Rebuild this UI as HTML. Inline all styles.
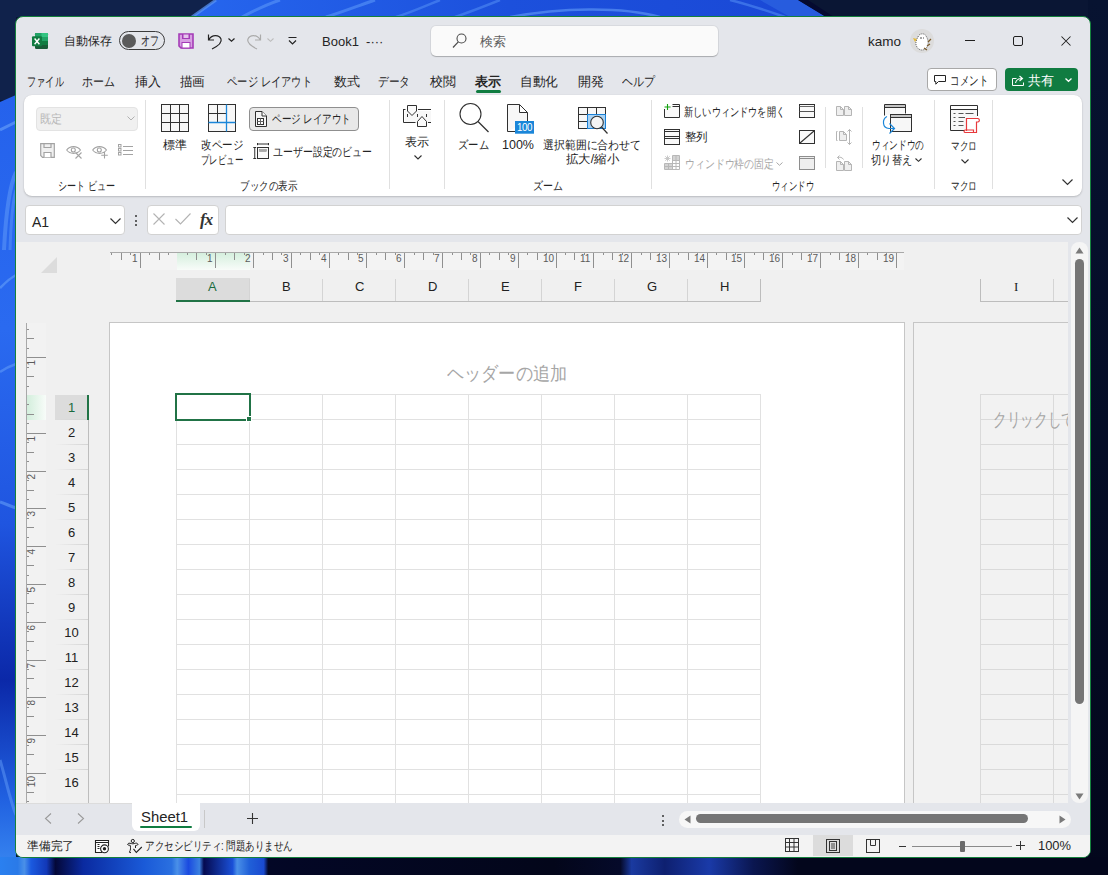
<!DOCTYPE html><html><head><meta charset="utf-8"><style>
*{box-sizing:border-box;margin:0;padding:0}
html,body{width:1108px;height:875px;overflow:hidden}
body{position:relative;font-family:"Liberation Sans",sans-serif;color:#242424;background:#0c1a3a}
.a{position:absolute}
.t{position:absolute;white-space:nowrap;font-size:13px;line-height:16px}
svg{position:absolute;overflow:visible}
#wp{position:absolute;left:0;top:0;width:1108px;height:875px;overflow:hidden;background:#0f2149}
#win{position:absolute;left:15px;top:16px;width:1076px;height:842px;border:1px solid #14803c;border-radius:8px;background:#e4e6eb;overflow:hidden}
</style></head><body><div id="wp">
<svg style="left:0px;top:0px" width="1108" height="875" viewBox="0 0 1108 875">
<defs>
<linearGradient id="gl" x1="0" y1="0" x2="0" y2="1">
<stop offset="0" stop-color="#2562ec"/><stop offset="0.3" stop-color="#2a6af0"/><stop offset="0.55" stop-color="#1f55e0"/>
<stop offset="0.75" stop-color="#0b28a8"/><stop offset="0.9" stop-color="#2060e0"/><stop offset="1" stop-color="#3a8af2"/></linearGradient>
<linearGradient id="gt" x1="0" y1="0" x2="1" y2="0">
<stop offset="0" stop-color="#2666ee"/><stop offset="0.5" stop-color="#1c50dc"/><stop offset="1" stop-color="#1a48d6"/></linearGradient>
<linearGradient id="gr" x1="0" y1="0" x2="0" y2="1">
<stop offset="0" stop-color="#071331"/><stop offset="1" stop-color="#03071c"/></linearGradient>
</defs>
<rect x="0" y="0" width="1108" height="875" fill="#0a1634"/>
<rect x="0" y="0" width="600" height="17" fill="#10224b"/>
<rect x="1088" y="0" width="20" height="875" fill="url(#gr)"/>
<path d="M216 0 L798 0 L826 17 L192 17 Z" fill="url(#gt)"/><path d="M760 0 L798 0 L826 17 L790 17 Z" fill="#2a62e0" opacity=".8"/><path d="M798 0 L826 17 L834 17 L808 0 Z" fill="#050a30"/>
<path d="M216 0 L192 17" stroke="#5a96f8" stroke-width="3" opacity=".7"/>
<path d="M280 0 C265 5 255 10 242 17" stroke="#5a96f8" stroke-width="3" opacity=".6" fill="none"/>
<path d="M375 0 C360 5 345 11 326 17" stroke="#5a96f8" stroke-width="3" opacity=".6" fill="none"/>
<path d="M440 0 C425 6 412 12 396 17" stroke="#5a96f8" stroke-width="2.5" opacity=".5" fill="none"/>
<path d="M500 0 C480 8 470 12 455 17" stroke="#5a96f8" stroke-width="2.5" opacity=".5" fill="none"/>
<path d="M510 17 C560 8 620 6 660 17" stroke="#6aa4fa" stroke-width="2.5" opacity=".55" fill="none"/>
<path d="M730 0 C750 5 765 10 785 17" stroke="#5a96f8" stroke-width="2.5" opacity=".5" fill="none"/>

<rect x="0" y="0" width="16" height="100" fill="#10224b"/>
<path d="M0 102 L16 95 L16 875 L0 875 Z" fill="url(#gl)"/>
<path d="M0 130 C6 127 12 124 16 122" stroke="#6aa4fa" stroke-width="3" opacity=".6" fill="none"/>
<path d="M4 250 C6 210 10 185 16 172" stroke="#6aa4fa" stroke-width="4" opacity=".45" fill="none"/>
<path d="M10 250 C11 220 13 200 16 190" stroke="#6aa4fa" stroke-width="3" opacity=".4" fill="none"/>
<path d="M0 288 C6 282 10 278 16 275" stroke="#6aa4fa" stroke-width="2.5" opacity=".55" fill="none"/>
<path d="M0 372 C6 368 10 366 16 364" stroke="#6aa4fa" stroke-width="2.5" opacity=".5" fill="none"/>
<path d="M0 502 C6 504 10 506 16 508" stroke="#6aa4fa" stroke-width="3" opacity=".55" fill="none"/>
<path d="M0 760 C6 780 10 800 16 815" stroke="#6aa4fa" stroke-width="3" opacity=".45" fill="none"/>
<linearGradient id="gb" x1="0" y1="0" x2="1108" y2="0" gradientUnits="userSpaceOnUse">
<stop offset="0" stop-color="#2a80f0"/><stop offset="0.016" stop-color="#2a7ae8"/><stop offset="0.022" stop-color="#4a90e8"/><stop offset="0.028" stop-color="#1a5ae0"/>
<stop offset="0.042" stop-color="#1238b8"/><stop offset="0.05" stop-color="#040838"/><stop offset="0.075" stop-color="#0a2aa0"/><stop offset="0.13" stop-color="#1a5ad8"/>
<stop offset="0.155" stop-color="#2a70e0"/><stop offset="0.16" stop-color="#4a90e8"/><stop offset="0.17" stop-color="#1a4ae0"/><stop offset="0.18" stop-color="#3a80e0"/>
<stop offset="0.184" stop-color="#050a50"/><stop offset="0.21" stop-color="#1a50d8"/><stop offset="0.214" stop-color="#4a90e8"/><stop offset="0.225" stop-color="#2060d8"/>
<stop offset="0.238" stop-color="#1a4ad0"/><stop offset="0.242" stop-color="#030726"/><stop offset="0.5" stop-color="#03061a"/><stop offset="0.56" stop-color="#050a2a"/>
<stop offset="0.57" stop-color="#1a3aa0"/><stop offset="0.6" stop-color="#0e2070"/><stop offset="0.64" stop-color="#1a3aa8"/><stop offset="0.68" stop-color="#0a1650"/>
<stop offset="0.72" stop-color="#03061c"/><stop offset="1" stop-color="#03061c"/></linearGradient>
<rect x="0" y="857" width="1108" height="18" fill="url(#gb)"/>
</svg>
</div>
<div id="win"><div class="a" style="left:-16px;top:-17px;width:1108px;height:875px">
<svg style="left:32px;top:33px" width="16" height="16" viewBox="0 0 16 16">
<rect x="3" y="0" width="13" height="16" rx="1.2" fill="#185c37"/>
<rect x="3" y="0" width="13" height="4" rx="1" fill="#21a366"/>
<rect x="9.5" y="0" width="6.5" height="4" fill="#33c481"/>
<rect x="3" y="4" width="13" height="4" fill="#107c41"/>
<rect x="9.5" y="4" width="6.5" height="4" fill="#21a366"/>
<rect x="3" y="8" width="13" height="4" fill="#185c37"/>
<rect x="9.5" y="8" width="6.5" height="4" fill="#107c41"/>
<rect x="0" y="3.3" width="10" height="10" rx="1" fill="#107c41"/>
<path d="M2.6 5.5 L7.4 11.2 M7.4 5.5 L2.6 11.2" stroke="#fff" stroke-width="1.4"/>
</svg>
<div class="t f" style="left:64px;top:33.0px;font-size:12px;line-height:16px;color:#242424;width:48px;">自動保存</div>
<div class="a" style="left:119px;top:31px;width:46px;height:19px;border:1.3px solid #3b3b3b;border-radius:10px;"></div>
<div class="a" style="left:122px;top:33.5px;width:14px;height:14px;background:#5b5b5b;border-radius:50%;"></div>
<div class="t f" style="left:141px;top:32.0px;font-size:13px;line-height:17px;color:#242424;width:18px;">オフ</div>
<svg style="left:178px;top:33px" width="16" height="16" viewBox="0 0 16 16">
<path d="M1 1 H15 V15 H3 L1 13 Z" fill="#d79fe2" stroke="#a43bb7" stroke-width="1.6"/>
<rect x="4" y="1" width="8" height="5" fill="#a43bb7"/>
<rect x="5.5" y="1.5" width="5" height="3.5" fill="#e5c4ec"/>
<rect x="4" y="9.5" width="8" height="5.5" fill="#fff" stroke="#a43bb7" stroke-width="1"/>
</svg>
<svg style="left:207px;top:33px" width="16" height="16" viewBox="0 0 16 16"><path d="M1.5 1.5 V7 H7 M2 6.5 C5 1.5 12 1.5 14 6 C15.5 10 11 13 5 16" fill="none" stroke="#242424" stroke-width="1.2"/></svg>
<svg style="left:228px;top:38px" width="7" height="4" viewBox="0 0 7 4"><path d="M0.5 0.5 L3.5 3.3 L6.5 0.5" fill="none" stroke="#242424" stroke-width="1.2"/></svg>
<svg style="left:246px;top:33px" width="16" height="16" viewBox="0 0 16 16"><path d="M14.5 1.5 V7 H9 M14 6.5 C11 1.5 4 1.5 2 6 C0.5 10 5 13 11 16" fill="none" stroke="#ababab" stroke-width="1.2"/></svg>
<svg style="left:267px;top:38px" width="7" height="4" viewBox="0 0 7 4"><path d="M0.5 0.5 L3.5 3.3 L6.5 0.5" fill="none" stroke="#bdbdbd" stroke-width="1.1"/></svg>
<svg style="left:288px;top:36px" width="9" height="9" viewBox="0 0 9 9"><path d="M0.5 1.5 H8.5 M1 4.5 L4.5 8 L8 4.5" fill="none" stroke="#242424" stroke-width="1.2"/></svg>
<div class="t" style="left:322px;top:32.5px;font-size:13px;line-height:17px;color:#242424;">Book1 &nbsp;-···</div>
<div class="a" style="left:431px;top:26px;width:287px;height:30px;background:#fafafa;border-radius:5px;box-shadow:0 1px 1px rgba(0,0,0,.22),0 0 0 1px rgba(0,0,0,.05);"></div>
<svg style="left:452px;top:33px" width="15" height="16" viewBox="0 0 15 16"><circle cx="9.5" cy="5.5" r="4.5" fill="none" stroke="#4a4a4a" stroke-width="1.1"/><path d="M6.3 8.8 L1 14.5" stroke="#4a4a4a" stroke-width="1.2"/></svg>
<div class="t f" style="left:480px;top:32.5px;font-size:13px;line-height:17px;color:#5d5d5d;width:26px;">検索</div>
<div class="t f" style="left:868px;top:32.5px;font-size:13px;line-height:17px;color:#242424;width:33px;">kamo</div>
<div class="a" style="left:910px;top:29px;width:24px;height:24px;background:#dcdcdc;border-radius:50%;"></div>
<svg style="left:910px;top:29px" width="24" height="24" viewBox="0 0 24 24"><path d="M8 8 C9 4 15 4 16 7 C18 10 19 14 17 18 C15 22 9 22 7 18 C5 15 6 11 8 8Z" fill="#fff" stroke="#222" stroke-width="0.7" stroke-dasharray="1 1"/><path d="M3 9 L7 10 L5 13Z" fill="#e3b93b"/><path d="M18 13 L21 10 M17 17 L20 15 M14 19 L17 21" stroke="#7a5a2a" stroke-width="1.2"/><path d="M10 9 H12 M13 9 H14" stroke="#222" stroke-width="0.8"/></svg>
<div class="a" style="left:965px;top:40px;width:10px;height:1px;background:#1f1f1f;"></div>
<div class="a" style="left:1013px;top:36px;width:10px;height:10px;border:1px solid #1f1f1f;border-radius:2px;"></div>
<svg style="left:1061px;top:36px" width="10" height="10" viewBox="0 0 10 10"><path d="M0.5 0.5 L9.5 9.5 M9.5 0.5 L0.5 9.5" stroke="#1f1f1f" stroke-width="1.05"/></svg>
<div class="t f" style="left:27px;top:72.5px;font-size:13px;line-height:17px;color:#242424;width:37px;">ファイル</div>
<div class="t f" style="left:82px;top:72.5px;font-size:13px;line-height:17px;color:#242424;width:33px;">ホーム</div>
<div class="t f" style="left:135px;top:72.5px;font-size:13px;line-height:17px;color:#242424;width:26px;">挿入</div>
<div class="t f" style="left:180px;top:72.5px;font-size:13px;line-height:17px;color:#242424;width:25px;">描画</div>
<div class="t f" style="left:227px;top:72.5px;font-size:13px;line-height:17px;color:#242424;width:85px;">ページ レイアウト</div>
<div class="t f" style="left:334px;top:72.5px;font-size:13px;line-height:17px;color:#242424;width:26px;">数式</div>
<div class="t f" style="left:378px;top:72.5px;font-size:13px;line-height:17px;color:#242424;width:32px;">データ</div>
<div class="t f" style="left:430px;top:72.5px;font-size:13px;line-height:17px;color:#242424;width:26px;">校閲</div>
<div class="t f" style="left:475px;top:72.5px;font-size:13px;line-height:17px;color:#242424;width:26px;font-weight:bold;">表示</div>
<div class="t f" style="left:520px;top:72.5px;font-size:13px;line-height:17px;color:#242424;width:38px;">自動化</div>
<div class="t f" style="left:578px;top:72.5px;font-size:13px;line-height:17px;color:#242424;width:26px;">開発</div>
<div class="t f" style="left:622px;top:72.5px;font-size:13px;line-height:17px;color:#242424;width:33px;">ヘルプ</div>
<div class="a" style="left:476px;top:90px;width:25px;height:2.5px;background:#107c41;border-radius:2px;"></div>
<div class="a" style="left:927px;top:68px;width:70px;height:23px;background:#fff;border:1px solid #a8a8a8;border-radius:4px;"></div>
<svg style="left:934px;top:75px" width="13" height="11" viewBox="0 0 13 11"><path d="M0.5 0.5 H11.5 V6.5 H4.5 L1.8 9.2 V6.5 H0.5 Z" fill="none" stroke="#242424" stroke-width="1"/></svg>
<div class="t f" style="left:950px;top:71.5px;font-size:13px;line-height:17px;color:#242424;width:38px;">コメント</div>
<div class="a" style="left:1005px;top:68px;width:73px;height:23px;background:#107c41;border-radius:4px;"></div>
<svg style="left:1012px;top:75px" width="14" height="12" viewBox="0 0 14 12"><path d="M4.5 3.5 H0.5 V10.5 H11.5 V7.5" fill="none" stroke="#fff" stroke-width="1"/><path d="M3.5 8 C4 5 6 3.5 10 3.5 M7.5 1 L10.5 3.5 L7.5 6" fill="none" stroke="#fff" stroke-width="1.1"/></svg>
<div class="t f" style="left:1028px;top:71.5px;font-size:13px;line-height:17px;color:#ffffff;width:26px;">共有</div>
<svg style="left:1065px;top:78px" width="7" height="4" viewBox="0 0 7 4"><path d="M0.5 0.5 L3.5 3.3 L6.5 0.5" fill="none" stroke="#fff" stroke-width="1.3"/></svg>
<div class="a" style="left:24px;top:95px;width:1058px;height:101px;background:#fff;border-radius:8px;box-shadow:0 1px 2px rgba(0,0,0,.18),0 0 1px rgba(0,0,0,.12);"></div>
<div class="a" style="left:145px;top:100px;width:1px;height:89px;background:#e0e0e0;"></div>
<div class="a" style="left:389px;top:100px;width:1px;height:89px;background:#e0e0e0;"></div>
<div class="a" style="left:444px;top:100px;width:1px;height:89px;background:#e0e0e0;"></div>
<div class="a" style="left:651px;top:100px;width:1px;height:89px;background:#e0e0e0;"></div>
<div class="a" style="left:934px;top:100px;width:1px;height:89px;background:#e0e0e0;"></div>
<div class="a" style="left:992px;top:100px;width:1px;height:89px;background:#e0e0e0;"></div>
<div class="a" style="left:825px;top:107px;width:1px;height:61px;background:#e0e0e0;"></div>
<div class="a" style="left:862px;top:107px;width:1px;height:61px;background:#e0e0e0;"></div>
<div class="t f" style="left:58px;top:177.5px;font-size:12px;line-height:16px;color:#242424;width:57px;">シート ビュー</div>
<div class="t f" style="left:240px;top:177.5px;font-size:12px;line-height:16px;color:#242424;width:57px;">ブックの表示</div>
<div class="t f" style="left:533px;top:177.5px;font-size:12px;line-height:16px;color:#242424;width:30px;">ズーム</div>
<div class="t f" style="left:772px;top:177.5px;font-size:12px;line-height:16px;color:#242424;width:42px;">ウィンドウ</div>
<div class="t f" style="left:951px;top:177.5px;font-size:12px;line-height:16px;color:#242424;width:26px;">マクロ</div>
<div class="a" style="left:36px;top:107px;width:102px;height:24px;background:#f0f0f0;border:1px solid #e3e3e3;border-radius:4px;"></div>
<div class="t f" style="left:40px;top:110.5px;font-size:12px;line-height:16px;color:#b8b8b8;width:22px;">既定</div>
<svg style="left:127px;top:116px" width="8" height="5" viewBox="0 0 8 5"><path d="M0.5 0.5 L4 4 L7.5 0.5" fill="none" stroke="#b0b0b0" stroke-width="1"/></svg>
<svg style="left:40px;top:143px" width="16" height="16" viewBox="0 0 16 16"><path d="M0.7 0.7 H14.3 V14.3 H2.5 L0.7 12.5 Z" fill="#f0f0f0" stroke="#a3a3a3" stroke-width="1.2"/><path d="M4 0.7 V4.5 H11 V0.7" fill="none" stroke="#a3a3a3" stroke-width="1.2"/><path d="M4 14.3 V9.5 H11 V14.3" fill="#fff" stroke="#a3a3a3" stroke-width="1.2"/></svg>
<svg style="left:66px;top:146px" width="17" height="14" viewBox="0 0 17 14"><path d="M0.7 4 C4 -0.5 11 -0.5 14.5 4 C11 8.5 4 8.5 0.7 4Z" fill="none" stroke="#a3a3a3" stroke-width="1.1"/><circle cx="7.3" cy="4" r="2" fill="none" stroke="#a3a3a3" stroke-width="1.1"/><path d="M9.5 6.5 L15.5 12.5 M15.5 6.5 L9.5 12.5" stroke="#a3a3a3" stroke-width="1.1"/></svg>
<svg style="left:92px;top:146px" width="17" height="14" viewBox="0 0 17 14"><path d="M0.7 4 C4 -0.5 11 -0.5 14.5 4 C11 8.5 4 8.5 0.7 4Z" fill="none" stroke="#a3a3a3" stroke-width="1.1"/><circle cx="7.3" cy="4" r="2" fill="none" stroke="#a3a3a3" stroke-width="1.1"/><path d="M12.5 6 V12.5 M9.2 9.2 H15.8" stroke="#a3a3a3" stroke-width="1.1"/></svg>
<svg style="left:118px;top:144px" width="16" height="14" viewBox="0 0 16 14"><rect x="0.5" y="0.5" width="2.5" height="2.5" fill="none" stroke="#a3a3a3"/><rect x="0.5" y="4.5" width="2.5" height="2.5" fill="none" stroke="#a3a3a3"/><rect x="0.5" y="8.5" width="2.5" height="2.5" fill="none" stroke="#a3a3a3"/><path d="M5 2.5 H15 M5 6.5 H15 M5 10.5 H15" stroke="#a3a3a3" stroke-width="1"/></svg>
<svg style="left:161px;top:104px" width="28" height="28" viewBox="0 0 28 28"><rect x="0.5" y="0.5" width="27" height="27" fill="#f7f7f7" stroke="#303030" stroke-width="1"/><path d="M9.5 0.5 V27.5 M18.5 0.5 V27.5 M0.5 9.5 H27.5 M0.5 18.5 H27.5" stroke="#303030" stroke-width="1"/></svg>
<div class="t f" style="left:163px;top:136.5px;font-size:12px;line-height:16px;color:#242424;width:24px;">標準</div>
<svg style="left:208px;top:104px" width="28" height="28" viewBox="0 0 28 28"><rect x="0.5" y="0.5" width="27" height="27" fill="#f7f7f7" stroke="#303030" stroke-width="1"/><path d="M9.5 0.5 V18.5 M0.5 9.5 H18.5" stroke="#303030" stroke-width="1"/><path d="M18.5 0.5 V27.5 M0.5 18.5 H27.5" stroke="#1a86d9" stroke-width="1.3"/></svg>
<div class="t f" style="left:201px;top:137.0px;font-size:12px;line-height:16px;color:#242424;width:42px;">改ページ</div>
<div class="t f" style="left:201px;top:151.5px;font-size:12px;line-height:16px;color:#242424;width:42px;">プレビュー</div>
<div class="a" style="left:249px;top:107px;width:110px;height:24px;background:#e8e8e8;border:1px solid #8f8f8f;border-radius:4px;"></div>
<svg style="left:255px;top:111px" width="12" height="16" viewBox="0 0 12 16"><path d="M0.5 15.5 V0.5 H7 L11.5 5 V15.5 Z" fill="#f4f4f4" stroke="#303030" stroke-width="1"/><path d="M7 0.5 V5 H11.5" fill="#fff" stroke="#303030" stroke-width="1"/><rect x="2.5" y="7.5" width="6" height="6" fill="#fff" stroke="#303030" stroke-width="1"/><path d="M5.5 7.5 V13.5 M2.5 10.5 H8.5" stroke="#666" stroke-width="1"/></svg>
<div class="t f" style="left:272px;top:111.0px;font-size:12px;line-height:16px;color:#242424;width:79px;">ページ レイアウト</div>
<svg style="left:253px;top:143px" width="17" height="17" viewBox="0 0 17 17"><path d="M0.3 4.5 H3.2 M1.75 4.5 V15.5 M0.3 15.5 H3.2 M4.5 1 H15.5 M4.5 0 V2.2 M15.5 0 V2.2" fill="none" stroke="#303030" stroke-width="1"/><rect x="4.5" y="4.5" width="11" height="11" fill="#f9f9f9" stroke="#303030"/><rect x="6.5" y="6.5" width="7" height="2" fill="#a8a8a8" stroke="#888" stroke-width="0.5"/></svg>
<div class="t f" style="left:273px;top:143.5px;font-size:12px;line-height:16px;color:#242424;width:99px;">ユーザー設定のビュー</div>
<svg style="left:403px;top:104px" width="29" height="24" viewBox="0 0 29 24"><rect x="2" y="7" width="26" height="12" fill="#f7f7f7"/><path d="M0.5 5.5 H2.5 M0.5 5 V18.5 H12.5 M15 5.5 H28 M4.5 10 V13 M14.5 10 V13 M23.5 10 V13 M25 18.5 H28" fill="none" stroke="#303030" stroke-width="1"/><path d="M4.5 1.5 H13.5 V7 L9 11.5 L4.5 7 Z M14.5 22.5 V17.5 L19 12.5 L23.5 17.5 V22.5 Z" fill="#fafafa" stroke="#303030" stroke-width="1"/></svg>
<div class="t f" style="left:405px;top:134.0px;font-size:12px;line-height:16px;color:#242424;width:24px;">表示</div>
<svg style="left:414px;top:155px" width="8" height="5" viewBox="0 0 8 5"><path d="M0.5 0.5 L4 4 L7.5 0.5" fill="none" stroke="#303030" stroke-width="1.1"/></svg>
<svg style="left:459px;top:103px" width="31" height="30" viewBox="0 0 31 30"><circle cx="11.5" cy="11" r="10.5" fill="none" stroke="#303030" stroke-width="1.1"/><path d="M19 18.5 L29.5 29" stroke="#303030" stroke-width="1.2"/></svg>
<div class="t f" style="left:458px;top:136.5px;font-size:12px;line-height:16px;color:#242424;width:31px;">ズーム</div>
<svg style="left:507px;top:104px" width="28" height="30" viewBox="0 0 28 30"><path d="M0.5 27.5 V0.5 H12.5 L20.5 8.5 V17 M12.5 0.5 V8.5 H20.5" fill="#f7f7f7" stroke="#303030" stroke-width="1"/><path d="M0.5 27.5 H8" stroke="#303030"/><rect x="8" y="17" width="19" height="12.7" fill="#1a86d9"/></svg>
<div class="t f" style="left:516.5px;top:120.0px;font-size:11px;line-height:15px;color:#ffffff;width:15px;letter-spacing:-0.5px;">100</div>
<div class="t f" style="left:502px;top:136.5px;font-size:12px;line-height:16px;color:#242424;width:32px;">100%</div>
<svg style="left:578px;top:107px" width="31" height="28" viewBox="0 0 31 28"><rect x="0.5" y="0.5" width="27" height="21" fill="#f7f7f7" stroke="#303030"/><path d="M0.5 7.5 H27.5 M0.5 14.5 H27.5 M9.5 0.5 V21.5 M18.5 0.5 V21.5" stroke="#303030"/><rect x="9.5" y="7.5" width="18" height="14" fill="#a8d2f4" stroke="#1a7fd4" stroke-width="1"/><circle cx="19" cy="15.5" r="6.3" fill="#f4f4f4" stroke="#303030" stroke-width="1.1"/><path d="M23.5 20 L29.5 26.5" stroke="#303030" stroke-width="1.2"/></svg>
<div class="t f" style="left:543px;top:136.5px;font-size:12px;line-height:16px;color:#242424;width:98px;">選択範囲に合わせて</div>
<div class="t f" style="left:566px;top:151.0px;font-size:12px;line-height:16px;color:#242424;width:53px;">拡大/縮小</div>
<svg style="left:664px;top:104px" width="17" height="15" viewBox="0 0 17 15"><path d="M0.5 5 V13.5 H15.5 V0.5 H8.5 M8.5 2.5 H15.5" fill="#f9f9f9" stroke="#303030" stroke-width="1"/><path d="M3.5 0 V6 M0.5 3 H6.5" stroke="#13a10e" stroke-width="1.1"/></svg>
<div class="t f" style="left:684px;top:103.5px;font-size:12px;line-height:16px;color:#242424;width:101px;">新しいウィンドウを開く</div>
<svg style="left:664px;top:129px" width="17" height="16" viewBox="0 0 17 16"><rect x="0.5" y="0.5" width="15" height="15" fill="#f9f9f9" stroke="#303030"/><path d="M0.5 2.5 H15.5 M0.5 7.5 H15.5 M0.5 9.5 H15.5" stroke="#303030"/></svg>
<div class="t f" style="left:685px;top:129.0px;font-size:12px;line-height:16px;color:#242424;width:23px;">整列</div>
<svg style="left:664px;top:155px" width="17" height="16" viewBox="0 0 17 16"><rect x="8" y="1" width="7" height="4.5" fill="#d4d4d4"/><rect x="1" y="8.5" width="7" height="5.5" fill="#d4d4d4"/><path d="M0.5 8.5 V14.5 H15.5 V0.5 H8.5 M0.5 8.5 H15.5 M8.5 0.5 V14.5 M0.5 11.5 H15.5 M12 0.5 V14.5 M8.5 5.5 H15.5 M4.5 8.5 V14.5" fill="none" stroke="#b8b8b8"/><path d="M3.5 0.5 V6.5 M0.5 3.5 H6.5 M1.3 1.3 L5.7 5.7 M5.7 1.3 L1.3 5.7" stroke="#c4c4c4" stroke-width="0.9"/></svg>
<div class="t f" style="left:685px;top:155.5px;font-size:12px;line-height:16px;color:#a8a8a8;width:89px;">ウィンドウ枠の固定</div>
<svg style="left:776px;top:162px" width="7" height="4" viewBox="0 0 7 4"><path d="M0.5 0.5 L3.5 3.3 L6.5 0.5" fill="none" stroke="#a8a8a8" stroke-width="1"/></svg>
<svg style="left:799px;top:104px" width="16" height="14" viewBox="0 0 16 14"><rect x="0.5" y="0.5" width="15" height="13" fill="#f9f9f9" stroke="#303030"/><path d="M0.5 2.5 H15.5" stroke="#666"/><path d="M0.5 7.5 H15.5" stroke="#555"/></svg>
<svg style="left:799px;top:130px" width="16" height="14" viewBox="0 0 16 14"><rect x="0.5" y="0.5" width="15" height="13" fill="#f9f9f9" stroke="#303030"/><path d="M1 13 L15 1" stroke="#303030" stroke-width="1.1"/></svg>
<svg style="left:799px;top:156px" width="16" height="14" viewBox="0 0 16 14"><rect x="0.5" y="0.5" width="15" height="13" fill="#efefef" stroke="#8e8e8e"/><path d="M0.5 2.5 H15.5" stroke="#8e8e8e"/></svg>
<svg style="left:836px;top:106px" width="17" height="10" viewBox="0 0 17 10"><path d="M0.5 9.5 V0.5 H4.5 L7.5 3.5 V9.5 Z" fill="#efefef" stroke="#b5b5b5"/><path d="M4.5 0.5 V3.5 H7.5" fill="none" stroke="#b5b5b5"/><path d="M8.5 9.5 V0.5 H12.5 L15.5 3.5 V9.5 Z" fill="#efefef" stroke="#b5b5b5"/><path d="M12.5 0.5 V3.5 H15.5" fill="none" stroke="#b5b5b5"/></svg>
<svg style="left:836px;top:129px" width="17" height="16" viewBox="0 0 17 16"><path d="M1.5 2.5 H0.5 V11.5 H1.5" fill="none" stroke="#b5b5b5"/><path d="M3.5 11.5 V2.5 H7.5 L10.5 5.5 V11.5 Z" fill="#efefef" stroke="#b5b5b5"/><path d="M7.5 2.5 V5.5 H10.5" fill="none" stroke="#b5b5b5"/><path d="M13.5 0.5 V15.5 M11.5 2.5 L13.5 0.5 L15.5 2.5 M11.5 13.5 L13.5 15.5 L15.5 13.5" fill="none" stroke="#b5b5b5"/></svg>
<svg style="left:836px;top:155px" width="17" height="16" viewBox="0 0 17 16"><path d="M7.5 4.5 C6 2 4 2 1.5 2.5 M3.5 0.5 L1.5 2.5 L3.5 4.5" fill="none" stroke="#b5b5b5"/><path d="M0.5 15.5 V6.5 H4.5 L7.5 9.5 V15.5 Z" fill="#efefef" stroke="#b5b5b5"/><path d="M4.5 6.5 V9.5 H7.5" fill="none" stroke="#b5b5b5"/><path d="M8.5 15.5 V6.5 H12.5 L15.5 9.5 V15.5 Z" fill="#efefef" stroke="#b5b5b5"/><path d="M12.5 6.5 V9.5 H15.5" fill="none" stroke="#b5b5b5"/></svg>
<svg style="left:882px;top:104px" width="31" height="30" viewBox="0 0 31 30"><path d="M2.5 11.5 V0.5 H23.5 V9.5" fill="#f7f7f7" stroke="#303030"/><rect x="3" y="1" width="20" height="2.5" fill="#c4c4c4"/><path d="M2.5 3.5 H23.5" stroke="#303030"/><rect x="8.5" y="10.5" width="21" height="17" fill="#f7f7f7" stroke="#303030"/><rect x="9" y="11" width="20" height="2.5" fill="#c4c4c4"/><path d="M8.5 13.5 H29.5" stroke="#303030"/><path d="M5 12.5 C0 15 0 24 7 24.5 H12.5 M7.5 19.5 L12.5 24.5 L7.5 29.5" fill="none" stroke="#1a86d9" stroke-width="1.2"/></svg>
<div class="t f" style="left:872px;top:137.0px;font-size:12px;line-height:16px;color:#242424;width:52px;">ウィンドウの</div>
<div class="t f" style="left:871px;top:152.0px;font-size:12px;line-height:16px;color:#242424;width:41px;">切り替え</div>
<svg style="left:915px;top:158px" width="7" height="4" viewBox="0 0 7 4"><path d="M0.5 0.5 L3.5 3.3 L6.5 0.5" fill="none" stroke="#303030" stroke-width="1.1"/></svg>
<svg style="left:950px;top:105px" width="31" height="30" viewBox="0 0 31 30"><path d="M16 25.5 H0.5 V0.5 H27.5 V11" fill="#f7f7f7" stroke="#303030"/><rect x="1" y="1" width="26" height="3.5" fill="#fff"/><path d="M0.5 4.5 H27.5" stroke="#303030"/><path d="M3.5 8.5 H5.5 M8.5 8.5 H13.5 M15.5 8.5 H23.5 M3.5 12.5 H5.5 M8.5 12.5 H15 M3.5 16.5 H5.5 M8.5 16.5 H13.5 M3.5 20.5 H5.5 M8.5 20.5 H13.5" stroke="#555" stroke-width="1"/><path d="M16.5 26 V13.5 H28 A1.8 1.8 0 0 1 28 17 H26.5 V27.5 H15 A1.3 1.3 0 0 1 15 25 H23.5 V27.5" fill="#fff" stroke="#e8393c" stroke-width="1.2"/></svg>
<div class="t f" style="left:951px;top:138.0px;font-size:12px;line-height:16px;color:#242424;width:26px;">マクロ</div>
<svg style="left:961px;top:159px" width="8" height="5" viewBox="0 0 8 5"><path d="M0.5 0.5 L4 4 L7.5 0.5" fill="none" stroke="#303030" stroke-width="1.1"/></svg>
<svg style="left:1062px;top:179px" width="11" height="6" viewBox="0 0 11 6"><path d="M0.5 0.5 L5.5 5.5 L10.5 0.5" fill="none" stroke="#333" stroke-width="1.2"/></svg>
<div class="a" style="left:25px;top:205px;width:100px;height:30px;background:#fff;border:1px solid #d2d2d2;border-radius:4px;"></div>
<div class="t" style="left:32px;top:213.0px;font-size:14px;line-height:18px;color:#242424;">A1</div>
<svg style="left:110px;top:218px" width="11" height="6" viewBox="0 0 11 6"><path d="M0.5 0.5 L5.5 5.5 L10.5 0.5" fill="none" stroke="#333" stroke-width="1.2"/></svg>
<div class="a" style="left:135px;top:215px;width:2.2px;height:2.2px;background:#333;border-radius:50%;"></div>
<div class="a" style="left:135px;top:219.5px;width:2.2px;height:2.2px;background:#333;border-radius:50%;"></div>
<div class="a" style="left:135px;top:224px;width:2.2px;height:2.2px;background:#333;border-radius:50%;"></div>
<div class="a" style="left:147px;top:205px;width:72px;height:30px;background:#fff;border:1px solid #d2d2d2;border-radius:4px;"></div>
<svg style="left:153px;top:213px" width="12" height="12" viewBox="0 0 12 12"><path d="M0.5 0.5 L11.5 11.5 M11.5 0.5 L0.5 11.5" stroke="#b3b3b3" stroke-width="1.1"/></svg>
<svg style="left:175px;top:213px" width="16" height="12" viewBox="0 0 16 12"><path d="M0.5 6 L5.5 11 L15.5 0.5" fill="none" stroke="#b3b3b3" stroke-width="1.1"/></svg>
<div class="t" style="left:200px;top:209.0px;font-size:17px;line-height:21px;color:#333;font-family:&quot;Liberation Serif&quot;,serif;font-weight:bold;letter-spacing:-1px;"><i>fx</i></div>
<div class="a" style="left:225px;top:205px;width:857px;height:30px;background:#fff;border:1px solid #d2d2d2;border-radius:4px;"></div>
<svg style="left:1067px;top:217px" width="11" height="6" viewBox="0 0 11 6"><path d="M0.5 0.5 L5.5 5.5 L10.5 0.5" fill="none" stroke="#333" stroke-width="1.2"/></svg>
<div class="a" style="left:16px;top:242px;width:1052px;height:561px;background:#f0f0f0;overflow:hidden">
<svg style="left:25px;top:15px" width="16" height="16" viewBox="0 0 16 16"><path d="M16 0 V16 H0 Z" fill="#dcdcdc"/></svg>
<div class="a" style="left:94px;top:10px;width:794px;height:18px;background:#f3f3f3;"></div>
<div class="a" style="left:161px;top:10px;width:73px;height:18px;background:linear-gradient(180deg,#d3eedc,#f8fcf9);"></div>
<div class="a" style="left:94px;top:10px;width:794px;height:1px;background:#a8a8a8;"></div>
<div class="a" style="left:95px;top:11px;width:1px;height:2px;background:#8f8f8f;"></div><div class="a" style="left:105px;top:11px;width:1px;height:7px;background:#8f8f8f;"></div><div class="a" style="left:114px;top:11px;width:1px;height:2px;background:#8f8f8f;"></div><div class="a" style="left:124px;top:11px;width:1px;height:15px;background:#8f8f8f;"></div><div class="t" style="left:116px;top:10.0px;font-size:10px;line-height:14px;color:#5b5b5b;">1</div><div class="a" style="left:133px;top:11px;width:1px;height:2px;background:#8f8f8f;"></div><div class="a" style="left:143px;top:11px;width:1px;height:7px;background:#8f8f8f;"></div><div class="a" style="left:152px;top:11px;width:1px;height:2px;background:#8f8f8f;"></div><div class="a" style="left:171px;top:11px;width:1px;height:2px;background:#8f8f8f;"></div><div class="a" style="left:180px;top:11px;width:1px;height:7px;background:#8f8f8f;"></div><div class="a" style="left:190px;top:11px;width:1px;height:2px;background:#8f8f8f;"></div><div class="a" style="left:199px;top:11px;width:1px;height:15px;background:#8f8f8f;"></div><div class="t" style="left:191px;top:10.0px;font-size:10px;line-height:14px;color:#5b5b5b;">1</div><div class="a" style="left:209px;top:11px;width:1px;height:2px;background:#8f8f8f;"></div><div class="a" style="left:218px;top:11px;width:1px;height:7px;background:#8f8f8f;"></div><div class="a" style="left:228px;top:11px;width:1px;height:2px;background:#8f8f8f;"></div><div class="a" style="left:237px;top:11px;width:1px;height:15px;background:#8f8f8f;"></div><div class="t" style="left:229px;top:10.0px;font-size:10px;line-height:14px;color:#5b5b5b;">2</div><div class="a" style="left:247px;top:11px;width:1px;height:2px;background:#8f8f8f;"></div><div class="a" style="left:256px;top:11px;width:1px;height:7px;background:#8f8f8f;"></div><div class="a" style="left:265px;top:11px;width:1px;height:2px;background:#8f8f8f;"></div><div class="a" style="left:275px;top:11px;width:1px;height:15px;background:#8f8f8f;"></div><div class="t" style="left:267px;top:10.0px;font-size:10px;line-height:14px;color:#5b5b5b;">3</div><div class="a" style="left:284px;top:11px;width:1px;height:2px;background:#8f8f8f;"></div><div class="a" style="left:294px;top:11px;width:1px;height:7px;background:#8f8f8f;"></div><div class="a" style="left:303px;top:11px;width:1px;height:2px;background:#8f8f8f;"></div><div class="a" style="left:313px;top:11px;width:1px;height:15px;background:#8f8f8f;"></div><div class="t" style="left:305px;top:10.0px;font-size:10px;line-height:14px;color:#5b5b5b;">4</div><div class="a" style="left:322px;top:11px;width:1px;height:2px;background:#8f8f8f;"></div><div class="a" style="left:332px;top:11px;width:1px;height:7px;background:#8f8f8f;"></div><div class="a" style="left:341px;top:11px;width:1px;height:2px;background:#8f8f8f;"></div><div class="a" style="left:350px;top:11px;width:1px;height:15px;background:#8f8f8f;"></div><div class="t" style="left:342px;top:10.0px;font-size:10px;line-height:14px;color:#5b5b5b;">5</div><div class="a" style="left:360px;top:11px;width:1px;height:2px;background:#8f8f8f;"></div><div class="a" style="left:369px;top:11px;width:1px;height:7px;background:#8f8f8f;"></div><div class="a" style="left:379px;top:11px;width:1px;height:2px;background:#8f8f8f;"></div><div class="a" style="left:388px;top:11px;width:1px;height:15px;background:#8f8f8f;"></div><div class="t" style="left:380px;top:10.0px;font-size:10px;line-height:14px;color:#5b5b5b;">6</div><div class="a" style="left:398px;top:11px;width:1px;height:2px;background:#8f8f8f;"></div><div class="a" style="left:407px;top:11px;width:1px;height:7px;background:#8f8f8f;"></div><div class="a" style="left:417px;top:11px;width:1px;height:2px;background:#8f8f8f;"></div><div class="a" style="left:426px;top:11px;width:1px;height:15px;background:#8f8f8f;"></div><div class="t" style="left:418px;top:10.0px;font-size:10px;line-height:14px;color:#5b5b5b;">7</div><div class="a" style="left:436px;top:11px;width:1px;height:2px;background:#8f8f8f;"></div><div class="a" style="left:445px;top:11px;width:1px;height:7px;background:#8f8f8f;"></div><div class="a" style="left:454px;top:11px;width:1px;height:2px;background:#8f8f8f;"></div><div class="a" style="left:464px;top:11px;width:1px;height:15px;background:#8f8f8f;"></div><div class="t" style="left:456px;top:10.0px;font-size:10px;line-height:14px;color:#5b5b5b;">8</div><div class="a" style="left:473px;top:11px;width:1px;height:2px;background:#8f8f8f;"></div><div class="a" style="left:483px;top:11px;width:1px;height:7px;background:#8f8f8f;"></div><div class="a" style="left:492px;top:11px;width:1px;height:2px;background:#8f8f8f;"></div><div class="a" style="left:502px;top:11px;width:1px;height:15px;background:#8f8f8f;"></div><div class="t" style="left:494px;top:10.0px;font-size:10px;line-height:14px;color:#5b5b5b;">9</div><div class="a" style="left:511px;top:11px;width:1px;height:2px;background:#8f8f8f;"></div><div class="a" style="left:521px;top:11px;width:1px;height:7px;background:#8f8f8f;"></div><div class="a" style="left:530px;top:11px;width:1px;height:2px;background:#8f8f8f;"></div><div class="a" style="left:540px;top:11px;width:1px;height:15px;background:#8f8f8f;"></div><div class="t" style="left:527px;top:10.0px;font-size:10px;line-height:14px;color:#5b5b5b;">10</div><div class="a" style="left:549px;top:11px;width:1px;height:2px;background:#8f8f8f;"></div><div class="a" style="left:558px;top:11px;width:1px;height:7px;background:#8f8f8f;"></div><div class="a" style="left:568px;top:11px;width:1px;height:2px;background:#8f8f8f;"></div><div class="a" style="left:577px;top:11px;width:1px;height:15px;background:#8f8f8f;"></div><div class="t" style="left:564px;top:10.0px;font-size:10px;line-height:14px;color:#5b5b5b;">11</div><div class="a" style="left:587px;top:11px;width:1px;height:2px;background:#8f8f8f;"></div><div class="a" style="left:596px;top:11px;width:1px;height:7px;background:#8f8f8f;"></div><div class="a" style="left:606px;top:11px;width:1px;height:2px;background:#8f8f8f;"></div><div class="a" style="left:615px;top:11px;width:1px;height:15px;background:#8f8f8f;"></div><div class="t" style="left:602px;top:10.0px;font-size:10px;line-height:14px;color:#5b5b5b;">12</div><div class="a" style="left:625px;top:11px;width:1px;height:2px;background:#8f8f8f;"></div><div class="a" style="left:634px;top:11px;width:1px;height:7px;background:#8f8f8f;"></div><div class="a" style="left:643px;top:11px;width:1px;height:2px;background:#8f8f8f;"></div><div class="a" style="left:653px;top:11px;width:1px;height:15px;background:#8f8f8f;"></div><div class="t" style="left:640px;top:10.0px;font-size:10px;line-height:14px;color:#5b5b5b;">13</div><div class="a" style="left:662px;top:11px;width:1px;height:2px;background:#8f8f8f;"></div><div class="a" style="left:672px;top:11px;width:1px;height:7px;background:#8f8f8f;"></div><div class="a" style="left:681px;top:11px;width:1px;height:2px;background:#8f8f8f;"></div><div class="a" style="left:691px;top:11px;width:1px;height:15px;background:#8f8f8f;"></div><div class="t" style="left:678px;top:10.0px;font-size:10px;line-height:14px;color:#5b5b5b;">14</div><div class="a" style="left:700px;top:11px;width:1px;height:2px;background:#8f8f8f;"></div><div class="a" style="left:710px;top:11px;width:1px;height:7px;background:#8f8f8f;"></div><div class="a" style="left:719px;top:11px;width:1px;height:2px;background:#8f8f8f;"></div><div class="a" style="left:728px;top:11px;width:1px;height:15px;background:#8f8f8f;"></div><div class="t" style="left:715px;top:10.0px;font-size:10px;line-height:14px;color:#5b5b5b;">15</div><div class="a" style="left:738px;top:11px;width:1px;height:2px;background:#8f8f8f;"></div><div class="a" style="left:747px;top:11px;width:1px;height:7px;background:#8f8f8f;"></div><div class="a" style="left:757px;top:11px;width:1px;height:2px;background:#8f8f8f;"></div><div class="a" style="left:766px;top:11px;width:1px;height:15px;background:#8f8f8f;"></div><div class="t" style="left:753px;top:10.0px;font-size:10px;line-height:14px;color:#5b5b5b;">16</div><div class="a" style="left:776px;top:11px;width:1px;height:2px;background:#8f8f8f;"></div><div class="a" style="left:785px;top:11px;width:1px;height:7px;background:#8f8f8f;"></div><div class="a" style="left:795px;top:11px;width:1px;height:2px;background:#8f8f8f;"></div><div class="a" style="left:804px;top:11px;width:1px;height:15px;background:#8f8f8f;"></div><div class="t" style="left:791px;top:10.0px;font-size:10px;line-height:14px;color:#5b5b5b;">17</div><div class="a" style="left:814px;top:11px;width:1px;height:2px;background:#8f8f8f;"></div><div class="a" style="left:823px;top:11px;width:1px;height:7px;background:#8f8f8f;"></div><div class="a" style="left:832px;top:11px;width:1px;height:2px;background:#8f8f8f;"></div><div class="a" style="left:842px;top:11px;width:1px;height:15px;background:#8f8f8f;"></div><div class="t" style="left:829px;top:10.0px;font-size:10px;line-height:14px;color:#5b5b5b;">18</div><div class="a" style="left:851px;top:11px;width:1px;height:2px;background:#8f8f8f;"></div><div class="a" style="left:861px;top:11px;width:1px;height:7px;background:#8f8f8f;"></div><div class="a" style="left:870px;top:11px;width:1px;height:2px;background:#8f8f8f;"></div><div class="a" style="left:880px;top:11px;width:1px;height:15px;background:#8f8f8f;"></div><div class="t" style="left:867px;top:10.0px;font-size:10px;line-height:14px;color:#5b5b5b;">19</div>
<div class="a" style="left:160px;top:36px;width:74px;height:23px;background:#dcdcdc;"></div>
<div class="t" style="left:192.0px;top:35.5px;font-size:13px;line-height:17px;color:#1a6b3f;">A</div>
<div class="t" style="left:266.0px;top:35.5px;font-size:13px;line-height:17px;color:#212121;">B</div>
<div class="a" style="left:233px;top:37px;width:1px;height:22px;background:#d4d4d4;"></div>
<div class="t" style="left:339.0px;top:35.5px;font-size:13px;line-height:17px;color:#212121;">C</div>
<div class="a" style="left:306px;top:37px;width:1px;height:22px;background:#d4d4d4;"></div>
<div class="t" style="left:412.0px;top:35.5px;font-size:13px;line-height:17px;color:#212121;">D</div>
<div class="a" style="left:379px;top:37px;width:1px;height:22px;background:#d4d4d4;"></div>
<div class="t" style="left:485.0px;top:35.5px;font-size:13px;line-height:17px;color:#212121;">E</div>
<div class="a" style="left:452px;top:37px;width:1px;height:22px;background:#d4d4d4;"></div>
<div class="t" style="left:558.0px;top:35.5px;font-size:13px;line-height:17px;color:#212121;">F</div>
<div class="a" style="left:525px;top:37px;width:1px;height:22px;background:#d4d4d4;"></div>
<div class="t" style="left:631.0px;top:35.5px;font-size:13px;line-height:17px;color:#212121;">G</div>
<div class="a" style="left:598px;top:37px;width:1px;height:22px;background:#d4d4d4;"></div>
<div class="t" style="left:704.0px;top:35.5px;font-size:13px;line-height:17px;color:#212121;">H</div>
<div class="a" style="left:671px;top:37px;width:1px;height:22px;background:#d4d4d4;"></div>
<div class="a" style="left:160px;top:59px;width:584px;height:1px;background:#bdbdbd;"></div>
<div class="a" style="left:160px;top:58px;width:74px;height:2px;background:#217346;"></div>
<div class="a" style="left:744px;top:37px;width:1px;height:23px;background:#bdbdbd;"></div>
<div class="a" style="left:964px;top:37px;width:1px;height:23px;background:#bdbdbd;"></div>
<div class="a" style="left:1037px;top:37px;width:1px;height:22px;background:#d4d4d4;"></div>
<div class="a" style="left:964px;top:59px;width:100px;height:1px;background:#bdbdbd;"></div>
<div class="t" style="left:998px;top:35.5px;font-size:13px;line-height:17px;color:#212121;font-family:&quot;Liberation Serif&quot;,serif;">I</div>
<div class="a" style="left:11px;top:81px;width:19px;height:480px;background:#f2f2f2;"></div>
<div class="a" style="left:11px;top:153px;width:19px;height:25px;background:linear-gradient(90deg,#d3eedc,#f8fcf9);"></div>
<div class="a" style="left:10px;top:81px;width:1px;height:480px;background:#a8a8a8;"></div>
<div class="a" style="left:11px;top:87px;width:2px;height:1px;background:#8f8f8f;"></div><div class="a" style="left:11px;top:96px;width:7px;height:1px;background:#8f8f8f;"></div><div class="a" style="left:11px;top:106px;width:2px;height:1px;background:#8f8f8f;"></div><div class="a" style="left:11px;top:115px;width:19px;height:1px;background:#8f8f8f;"></div><div class="t" style="left:11px;top:130px;width:12px;text-align:right;font-size:10px;line-height:10px;color:#5b5b5b;transform:rotate(-90deg);transform-origin:0 0;">1</div><div class="a" style="left:11px;top:125px;width:2px;height:1px;background:#8f8f8f;"></div><div class="a" style="left:11px;top:134px;width:7px;height:1px;background:#8f8f8f;"></div><div class="a" style="left:11px;top:144px;width:2px;height:1px;background:#8f8f8f;"></div><div class="a" style="left:11px;top:162px;width:2px;height:1px;background:#8f8f8f;"></div><div class="a" style="left:11px;top:172px;width:7px;height:1px;background:#8f8f8f;"></div><div class="a" style="left:11px;top:181px;width:2px;height:1px;background:#8f8f8f;"></div><div class="a" style="left:11px;top:191px;width:19px;height:1px;background:#8f8f8f;"></div><div class="t" style="left:11px;top:206px;width:12px;text-align:right;font-size:10px;line-height:10px;color:#5b5b5b;transform:rotate(-90deg);transform-origin:0 0;">1</div><div class="a" style="left:11px;top:200px;width:2px;height:1px;background:#8f8f8f;"></div><div class="a" style="left:11px;top:210px;width:7px;height:1px;background:#8f8f8f;"></div><div class="a" style="left:11px;top:219px;width:2px;height:1px;background:#8f8f8f;"></div><div class="a" style="left:11px;top:229px;width:19px;height:1px;background:#8f8f8f;"></div><div class="t" style="left:11px;top:244px;width:12px;text-align:right;font-size:10px;line-height:10px;color:#5b5b5b;transform:rotate(-90deg);transform-origin:0 0;">2</div><div class="a" style="left:11px;top:238px;width:2px;height:1px;background:#8f8f8f;"></div><div class="a" style="left:11px;top:248px;width:7px;height:1px;background:#8f8f8f;"></div><div class="a" style="left:11px;top:257px;width:2px;height:1px;background:#8f8f8f;"></div><div class="a" style="left:11px;top:266px;width:19px;height:1px;background:#8f8f8f;"></div><div class="t" style="left:11px;top:281px;width:12px;text-align:right;font-size:10px;line-height:10px;color:#5b5b5b;transform:rotate(-90deg);transform-origin:0 0;">3</div><div class="a" style="left:11px;top:276px;width:2px;height:1px;background:#8f8f8f;"></div><div class="a" style="left:11px;top:285px;width:7px;height:1px;background:#8f8f8f;"></div><div class="a" style="left:11px;top:295px;width:2px;height:1px;background:#8f8f8f;"></div><div class="a" style="left:11px;top:304px;width:19px;height:1px;background:#8f8f8f;"></div><div class="t" style="left:11px;top:319px;width:12px;text-align:right;font-size:10px;line-height:10px;color:#5b5b5b;transform:rotate(-90deg);transform-origin:0 0;">4</div><div class="a" style="left:11px;top:314px;width:2px;height:1px;background:#8f8f8f;"></div><div class="a" style="left:11px;top:323px;width:7px;height:1px;background:#8f8f8f;"></div><div class="a" style="left:11px;top:333px;width:2px;height:1px;background:#8f8f8f;"></div><div class="a" style="left:11px;top:342px;width:19px;height:1px;background:#8f8f8f;"></div><div class="t" style="left:11px;top:357px;width:12px;text-align:right;font-size:10px;line-height:10px;color:#5b5b5b;transform:rotate(-90deg);transform-origin:0 0;">5</div><div class="a" style="left:11px;top:351px;width:2px;height:1px;background:#8f8f8f;"></div><div class="a" style="left:11px;top:361px;width:7px;height:1px;background:#8f8f8f;"></div><div class="a" style="left:11px;top:370px;width:2px;height:1px;background:#8f8f8f;"></div><div class="a" style="left:11px;top:380px;width:19px;height:1px;background:#8f8f8f;"></div><div class="t" style="left:11px;top:395px;width:12px;text-align:right;font-size:10px;line-height:10px;color:#5b5b5b;transform:rotate(-90deg);transform-origin:0 0;">6</div><div class="a" style="left:11px;top:389px;width:2px;height:1px;background:#8f8f8f;"></div><div class="a" style="left:11px;top:399px;width:7px;height:1px;background:#8f8f8f;"></div><div class="a" style="left:11px;top:408px;width:2px;height:1px;background:#8f8f8f;"></div><div class="a" style="left:11px;top:418px;width:19px;height:1px;background:#8f8f8f;"></div><div class="t" style="left:11px;top:433px;width:12px;text-align:right;font-size:10px;line-height:10px;color:#5b5b5b;transform:rotate(-90deg);transform-origin:0 0;">7</div><div class="a" style="left:11px;top:427px;width:2px;height:1px;background:#8f8f8f;"></div><div class="a" style="left:11px;top:436px;width:7px;height:1px;background:#8f8f8f;"></div><div class="a" style="left:11px;top:446px;width:2px;height:1px;background:#8f8f8f;"></div><div class="a" style="left:11px;top:455px;width:19px;height:1px;background:#8f8f8f;"></div><div class="t" style="left:11px;top:470px;width:12px;text-align:right;font-size:10px;line-height:10px;color:#5b5b5b;transform:rotate(-90deg);transform-origin:0 0;">8</div><div class="a" style="left:11px;top:465px;width:2px;height:1px;background:#8f8f8f;"></div><div class="a" style="left:11px;top:474px;width:7px;height:1px;background:#8f8f8f;"></div><div class="a" style="left:11px;top:484px;width:2px;height:1px;background:#8f8f8f;"></div><div class="a" style="left:11px;top:493px;width:19px;height:1px;background:#8f8f8f;"></div><div class="t" style="left:11px;top:508px;width:12px;text-align:right;font-size:10px;line-height:10px;color:#5b5b5b;transform:rotate(-90deg);transform-origin:0 0;">9</div><div class="a" style="left:11px;top:503px;width:2px;height:1px;background:#8f8f8f;"></div><div class="a" style="left:11px;top:512px;width:7px;height:1px;background:#8f8f8f;"></div><div class="a" style="left:11px;top:522px;width:2px;height:1px;background:#8f8f8f;"></div><div class="a" style="left:11px;top:531px;width:19px;height:1px;background:#8f8f8f;"></div><div class="t" style="left:11px;top:546px;width:12px;text-align:right;font-size:10px;line-height:10px;color:#5b5b5b;transform:rotate(-90deg);transform-origin:0 0;">10</div><div class="a" style="left:11px;top:540px;width:2px;height:1px;background:#8f8f8f;"></div><div class="a" style="left:11px;top:550px;width:7px;height:1px;background:#8f8f8f;"></div><div class="a" style="left:11px;top:559px;width:2px;height:1px;background:#8f8f8f;"></div>
<div class="a" style="left:39px;top:153px;width:33px;height:25px;background:#dcdcdc;"></div>
<div class="t" style="left:39px;top:157.0px;font-size:13px;line-height:17px;color:#1a6b3f;width:33px;text-align:center;">1</div>
<div class="a" style="left:39px;top:177px;width:33px;height:1px;background:linear-gradient(90deg,rgba(212,212,212,0),#d4d4d4);"></div>
<div class="t" style="left:39px;top:182.0px;font-size:13px;line-height:17px;color:#212121;width:33px;text-align:center;">2</div>
<div class="a" style="left:39px;top:202px;width:33px;height:1px;background:linear-gradient(90deg,rgba(212,212,212,0),#d4d4d4);"></div>
<div class="t" style="left:39px;top:207.0px;font-size:13px;line-height:17px;color:#212121;width:33px;text-align:center;">3</div>
<div class="a" style="left:39px;top:227px;width:33px;height:1px;background:linear-gradient(90deg,rgba(212,212,212,0),#d4d4d4);"></div>
<div class="t" style="left:39px;top:232.0px;font-size:13px;line-height:17px;color:#212121;width:33px;text-align:center;">4</div>
<div class="a" style="left:39px;top:252px;width:33px;height:1px;background:linear-gradient(90deg,rgba(212,212,212,0),#d4d4d4);"></div>
<div class="t" style="left:39px;top:257.0px;font-size:13px;line-height:17px;color:#212121;width:33px;text-align:center;">5</div>
<div class="a" style="left:39px;top:277px;width:33px;height:1px;background:linear-gradient(90deg,rgba(212,212,212,0),#d4d4d4);"></div>
<div class="t" style="left:39px;top:282.0px;font-size:13px;line-height:17px;color:#212121;width:33px;text-align:center;">6</div>
<div class="a" style="left:39px;top:302px;width:33px;height:1px;background:linear-gradient(90deg,rgba(212,212,212,0),#d4d4d4);"></div>
<div class="t" style="left:39px;top:307.0px;font-size:13px;line-height:17px;color:#212121;width:33px;text-align:center;">7</div>
<div class="a" style="left:39px;top:327px;width:33px;height:1px;background:linear-gradient(90deg,rgba(212,212,212,0),#d4d4d4);"></div>
<div class="t" style="left:39px;top:332.0px;font-size:13px;line-height:17px;color:#212121;width:33px;text-align:center;">8</div>
<div class="a" style="left:39px;top:352px;width:33px;height:1px;background:linear-gradient(90deg,rgba(212,212,212,0),#d4d4d4);"></div>
<div class="t" style="left:39px;top:357.0px;font-size:13px;line-height:17px;color:#212121;width:33px;text-align:center;">9</div>
<div class="a" style="left:39px;top:377px;width:33px;height:1px;background:linear-gradient(90deg,rgba(212,212,212,0),#d4d4d4);"></div>
<div class="t" style="left:39px;top:382.0px;font-size:13px;line-height:17px;color:#212121;width:33px;text-align:center;">10</div>
<div class="a" style="left:39px;top:402px;width:33px;height:1px;background:linear-gradient(90deg,rgba(212,212,212,0),#d4d4d4);"></div>
<div class="t" style="left:39px;top:407.0px;font-size:13px;line-height:17px;color:#212121;width:33px;text-align:center;">11</div>
<div class="a" style="left:39px;top:427px;width:33px;height:1px;background:linear-gradient(90deg,rgba(212,212,212,0),#d4d4d4);"></div>
<div class="t" style="left:39px;top:432.0px;font-size:13px;line-height:17px;color:#212121;width:33px;text-align:center;">12</div>
<div class="a" style="left:39px;top:452px;width:33px;height:1px;background:linear-gradient(90deg,rgba(212,212,212,0),#d4d4d4);"></div>
<div class="t" style="left:39px;top:457.0px;font-size:13px;line-height:17px;color:#212121;width:33px;text-align:center;">13</div>
<div class="a" style="left:39px;top:477px;width:33px;height:1px;background:linear-gradient(90deg,rgba(212,212,212,0),#d4d4d4);"></div>
<div class="t" style="left:39px;top:482.0px;font-size:13px;line-height:17px;color:#212121;width:33px;text-align:center;">14</div>
<div class="a" style="left:39px;top:502px;width:33px;height:1px;background:linear-gradient(90deg,rgba(212,212,212,0),#d4d4d4);"></div>
<div class="t" style="left:39px;top:507.0px;font-size:13px;line-height:17px;color:#212121;width:33px;text-align:center;">15</div>
<div class="a" style="left:39px;top:527px;width:33px;height:1px;background:linear-gradient(90deg,rgba(212,212,212,0),#d4d4d4);"></div>
<div class="t" style="left:39px;top:532.0px;font-size:13px;line-height:17px;color:#212121;width:33px;text-align:center;">16</div>
<div class="a" style="left:72px;top:153px;width:1px;height:410px;background:#bdbdbd;"></div>
<div class="a" style="left:70.5px;top:153px;width:2.5px;height:25px;background:#217346;"></div>
<div class="a" style="left:93px;top:80px;width:796px;height:490px;background:#fff;border:1px solid #c6c6c6;"></div>
<div class="t f" style="left:431px;top:120.0px;font-size:19px;line-height:23px;color:#a6a6a6;width:120px;">ヘッダーの追加</div>
<div class="a" style="left:160px;top:152px;width:1px;height:420px;background:#e1e1e1;"></div><div class="a" style="left:233px;top:152px;width:1px;height:420px;background:#e1e1e1;"></div><div class="a" style="left:306px;top:152px;width:1px;height:420px;background:#e1e1e1;"></div><div class="a" style="left:379px;top:152px;width:1px;height:420px;background:#e1e1e1;"></div><div class="a" style="left:452px;top:152px;width:1px;height:420px;background:#e1e1e1;"></div><div class="a" style="left:525px;top:152px;width:1px;height:420px;background:#e1e1e1;"></div><div class="a" style="left:598px;top:152px;width:1px;height:420px;background:#e1e1e1;"></div><div class="a" style="left:671px;top:152px;width:1px;height:420px;background:#e1e1e1;"></div><div class="a" style="left:744px;top:152px;width:1px;height:420px;background:#e1e1e1;"></div><div class="a" style="left:160px;top:152px;width:585px;height:1px;background:#e1e1e1;"></div><div class="a" style="left:160px;top:177px;width:585px;height:1px;background:#e1e1e1;"></div><div class="a" style="left:160px;top:202px;width:585px;height:1px;background:#e1e1e1;"></div><div class="a" style="left:160px;top:227px;width:585px;height:1px;background:#e1e1e1;"></div><div class="a" style="left:160px;top:252px;width:585px;height:1px;background:#e1e1e1;"></div><div class="a" style="left:160px;top:277px;width:585px;height:1px;background:#e1e1e1;"></div><div class="a" style="left:160px;top:302px;width:585px;height:1px;background:#e1e1e1;"></div><div class="a" style="left:160px;top:327px;width:585px;height:1px;background:#e1e1e1;"></div><div class="a" style="left:160px;top:352px;width:585px;height:1px;background:#e1e1e1;"></div><div class="a" style="left:160px;top:377px;width:585px;height:1px;background:#e1e1e1;"></div><div class="a" style="left:160px;top:402px;width:585px;height:1px;background:#e1e1e1;"></div><div class="a" style="left:160px;top:427px;width:585px;height:1px;background:#e1e1e1;"></div><div class="a" style="left:160px;top:452px;width:585px;height:1px;background:#e1e1e1;"></div><div class="a" style="left:160px;top:477px;width:585px;height:1px;background:#e1e1e1;"></div><div class="a" style="left:160px;top:502px;width:585px;height:1px;background:#e1e1e1;"></div><div class="a" style="left:160px;top:527px;width:585px;height:1px;background:#e1e1e1;"></div><div class="a" style="left:160px;top:552px;width:585px;height:1px;background:#e1e1e1;"></div>
<div class="a" style="left:159px;top:151px;width:76px;height:28px;border:2px solid #217346;"></div>
<div class="a" style="left:230px;top:174px;width:6px;height:6px;background:#217346;border:1px solid #fff;"></div>
<div class="a" style="left:897px;top:80px;width:200px;height:490px;background:#f2f2f2;border:1px solid #c6c6c6;"></div>
<div class="a" style="left:964px;top:152px;width:1px;height:420px;background:#dadada;"></div><div class="a" style="left:1037px;top:152px;width:1px;height:420px;background:#dadada;"></div><div class="a" style="left:964px;top:152px;width:120px;height:1px;background:#dadada;"></div><div class="a" style="left:964px;top:177px;width:120px;height:1px;background:#dadada;"></div><div class="a" style="left:964px;top:202px;width:120px;height:1px;background:#dadada;"></div><div class="a" style="left:964px;top:227px;width:120px;height:1px;background:#dadada;"></div><div class="a" style="left:964px;top:252px;width:120px;height:1px;background:#dadada;"></div><div class="a" style="left:964px;top:277px;width:120px;height:1px;background:#dadada;"></div><div class="a" style="left:964px;top:302px;width:120px;height:1px;background:#dadada;"></div><div class="a" style="left:964px;top:327px;width:120px;height:1px;background:#dadada;"></div><div class="a" style="left:964px;top:352px;width:120px;height:1px;background:#dadada;"></div><div class="a" style="left:964px;top:377px;width:120px;height:1px;background:#dadada;"></div><div class="a" style="left:964px;top:402px;width:120px;height:1px;background:#dadada;"></div><div class="a" style="left:964px;top:427px;width:120px;height:1px;background:#dadada;"></div><div class="a" style="left:964px;top:452px;width:120px;height:1px;background:#dadada;"></div><div class="a" style="left:964px;top:477px;width:120px;height:1px;background:#dadada;"></div><div class="a" style="left:964px;top:502px;width:120px;height:1px;background:#dadada;"></div><div class="a" style="left:964px;top:527px;width:120px;height:1px;background:#dadada;"></div><div class="a" style="left:964px;top:552px;width:120px;height:1px;background:#dadada;"></div>
<div class="t f" style="left:977px;top:165.5px;font-size:19px;line-height:23px;color:#a6a6a6;width:178px;">クリックしてヘッダーを追加</div>
</div>
<div class="a" style="left:1071px;top:242px;width:17px;height:561px;background:#f5f5f5;border-radius:8px;"></div>
<svg style="left:1075px;top:247px" width="9" height="7" viewBox="0 0 9 7"><path d="M4.5 0.5 L8.5 6.5 H0.5 Z" fill="#7a7a7a"/></svg>
<div class="a" style="left:1075px;top:259px;width:9px;height:445px;background:#757575;border-radius:5px;"></div>
<svg style="left:1075px;top:793px" width="9" height="7" viewBox="0 0 9 7"><path d="M0.5 0.5 H8.5 L4.5 6.5 Z" fill="#7a7a7a"/></svg>
<div class="a" style="left:16px;top:803px;width:116px;height:32px;background:#e4e6eb;border-top-right-radius:7px;"></div>
<div class="a" style="left:16px;top:803px;width:116px;height:1px;background:#dcdcdc;"></div>
<div class="a" style="left:132px;top:803px;width:68px;height:28px;background:#fff;border-bottom-left-radius:6px;border-bottom-right-radius:6px;"></div>
<div class="a" style="left:132px;top:831px;width:68px;height:4px;background:#e4e6eb;"></div>
<div class="a" style="left:200px;top:803px;width:890px;height:32px;background:#e4e6eb;border-top-left-radius:7px;"></div>
<svg style="left:44px;top:813px" width="8" height="11" viewBox="0 0 8 11"><path d="M7 0.5 L1.5 5.5 L7 10.5" fill="none" stroke="#9a9a9a" stroke-width="1.1"/></svg>
<svg style="left:77px;top:813px" width="8" height="11" viewBox="0 0 8 11"><path d="M1 0.5 L6.5 5.5 L1 10.5" fill="none" stroke="#9a9a9a" stroke-width="1.1"/></svg>
<div class="t f" style="left:141px;top:808.0px;font-size:14px;line-height:18px;color:#242424;width:47px;">Sheet1</div>
<div class="a" style="left:140px;top:826px;width:52px;height:2px;background:#107c41;border-radius:1px;"></div>
<div class="a" style="left:204px;top:810px;width:1px;height:18px;background:#c8c8c8;"></div>
<svg style="left:247px;top:813px" width="11" height="11" viewBox="0 0 11 11"><path d="M5.5 0 V11 M0 5.5 H11" stroke="#333" stroke-width="1.1"/></svg>
<div class="a" style="left:661.5px;top:815px;width:2.2px;height:2.2px;background:#333;border-radius:50%;"></div>
<div class="a" style="left:661.5px;top:819.5px;width:2.2px;height:2.2px;background:#333;border-radius:50%;"></div>
<div class="a" style="left:661.5px;top:824px;width:2.2px;height:2.2px;background:#333;border-radius:50%;"></div>
<div class="a" style="left:679px;top:811px;width:392px;height:17px;background:#f7f7f7;border-radius:9px;"></div>
<svg style="left:684px;top:815px" width="7" height="9" viewBox="0 0 7 9"><path d="M6.5 0.5 V8.5 L0.5 4.5 Z" fill="#7a7a7a"/></svg>
<svg style="left:1059px;top:815px" width="7" height="9" viewBox="0 0 7 9"><path d="M0.5 0.5 V8.5 L6.5 4.5 Z" fill="#7a7a7a"/></svg>
<div class="a" style="left:696px;top:814px;width:332px;height:9px;background:#757575;border-radius:5px;"></div>
<div class="a" style="left:16px;top:835px;width:1074px;height:22px;background:#f3f3f3;"></div>
<div class="t f" style="left:27px;top:837.5px;font-size:12px;line-height:16px;color:#242424;width:47px;">準備完了</div>
<svg style="left:95px;top:840px" width="15" height="14" viewBox="0 0 15 14"><path d="M7 12.5 H0.5 V0.5 H13.5 V6.5" fill="#fff" stroke="#222" stroke-width="1.1"/><path d="M0.5 2.5 H13.5 M2.5 4.5 H4.5 M2.5 6.5 H4.5 M2.5 8.5 H4.5" stroke="#222" stroke-width="1"/><circle cx="9.5" cy="8.8" r="3.9" fill="#fff" stroke="#222" stroke-width="1.1"/><circle cx="9.5" cy="8.8" r="1.7" fill="#222"/></svg>
<svg style="left:127px;top:839px" width="16" height="15" viewBox="0 0 16 15"><circle cx="5.8" cy="2" r="1.6" fill="none" stroke="#222" stroke-width="1"/><path d="M0.8 5 C2 3.2 3.8 4.8 5.8 4.8 C7.8 4.8 9.6 3.2 10.8 5 C11.5 6 9.5 6.5 8.5 6.5 V9 M3.2 6.3 C2 6.3 0 6 0.8 5 M3.2 6.3 C3.8 9 3.6 11 2.5 13 C2.2 13.6 3 13.8 4 13.5" fill="none" stroke="#222" stroke-width="1"/><path d="M6.5 9.8 L9.3 13.5 L14.8 8" fill="none" stroke="#222" stroke-width="1.1"/></svg>
<div class="t f" style="left:145px;top:837.5px;font-size:12px;line-height:16px;color:#242424;width:148px;">アクセシビリティ: 問題ありません</div>
<div class="a" style="left:813px;top:835px;width:40px;height:21px;background:#dcdcdc;"></div>
<svg style="left:785px;top:838px" width="14" height="14" viewBox="0 0 14 14"><rect x="0.5" y="0.5" width="13" height="13" fill="none" stroke="#333"/><path d="M4.5 0.5 V13.5 M9 0.5 V13.5 M0.5 4.5 H13.5 M0.5 9 H13.5" stroke="#333"/></svg>
<svg style="left:826px;top:839px" width="14" height="14" viewBox="0 0 14 14"><rect x="0.5" y="0.5" width="13" height="13" fill="none" stroke="#333"/><rect x="3.5" y="2.5" width="7" height="9" fill="none" stroke="#333"/><path d="M5 5 H9 M5 7 H9 M5 9 H9" stroke="#333" stroke-width="0.9"/></svg>
<svg style="left:866px;top:839px" width="14" height="14" viewBox="0 0 14 14"><rect x="0.5" y="0.5" width="13" height="13" fill="none" stroke="#333"/><path d="M4.5 0.5 V6.5 H9.5 V0.5" fill="none" stroke="#333"/></svg>
<div class="a" style="left:899px;top:845.5px;width:7px;height:1px;background:#333;"></div>
<div class="a" style="left:912px;top:846px;width:100px;height:1px;background:#8a8a8a;"></div>
<div class="a" style="left:960px;top:840.5px;width:5px;height:11px;background:#6b6b6b;border-radius:1px;"></div>
<svg style="left:1016px;top:841px" width="10" height="10" viewBox="0 0 10 10"><path d="M4.5 0 V9 M0 4.5 H9" stroke="#333" stroke-width="1"/></svg>
<div class="t f" style="left:1038px;top:836.5px;font-size:13px;line-height:17px;color:#242424;width:33px;">100%</div>
</div></div>
<script>
(function(){
var els=document.querySelectorAll('.f');
for(var i=0;i<els.length;i++){
 var e=els[i];var W=parseFloat(e.style.width);
 e.style.width='auto';
 var nw=e.getBoundingClientRect().width;
 if(nw>0){var s=W/nw; e.style.transformOrigin='0 50%'; e.style.transform='scaleX('+s.toFixed(4)+')';}
}
})();
</script>
</body></html>
